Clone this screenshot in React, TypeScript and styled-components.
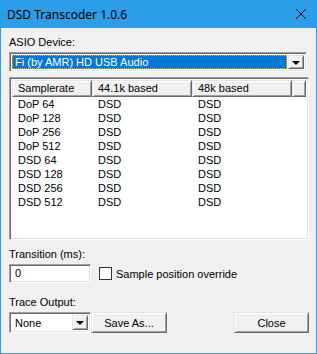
import React from 'react';
import styled, { createGlobalStyle } from 'styled-components';

const rates = ['DoP 64', 'DoP 128', 'DoP 256', 'DoP 512', 'DSD 64', 'DSD 128', 'DSD 256', 'DSD 512'];

const App: React.FC = () => {
  return (
    <Window>
      <GlobalStyle />
      <TitleBar>
        <Title>DSD Transcoder 1.0.6</Title>
        <CloseGlyph width="12" height="12" viewBox="0 0 12 12">
          <path d="M1 1 L11 11 M11 1 L1 11" stroke="#000" strokeWidth="1" fill="none" />
        </CloseGlyph>
      </TitleBar>

      <Body>
        <Label>ASIO Device:</Label>
        <Combo>
          <ComboValue $selected>Fi (by AMR) HD USB Audio</ComboValue>
          <DropButton>
            <Arrow />
          </DropButton>
        </Combo>

        <ListBox>
          <HeaderRow>
            <HeaderCell $w={80}>Samplerate</HeaderCell>
            <HeaderCell $w={100}>44.1k based</HeaderCell>
            <HeaderCell $w={100}>48k based</HeaderCell>
            <HeaderCell $w={15} />
          </HeaderRow>
          {rates.map((r) => (
            <Row key={r}>
              <Cell $w={80}>{r}</Cell>
              <Cell $w={100}>DSD</Cell>
              <Cell $w={100}>DSD</Cell>
            </Row>
          ))}
        </ListBox>

        <Label $top={8}>Transition (ms):</Label>
        <InputRow>
          <TextField>0</TextField>
          <CheckBox />
          <CheckLabel>Sample position override</CheckLabel>
        </InputRow>

        <Label $top={13}>Trace Output:</Label>
        <BottomRow>
          <SmallCombo>
            <ComboValue>None</ComboValue>
            <DropButton>
              <Arrow />
            </DropButton>
          </SmallCombo>
          <Button $w={76}>Save As...</Button>
          <Spacer />
          <Button $w={75}>Close</Button>
        </BottomRow>
      </Body>
    </Window>
  );
};

const GlobalStyle = createGlobalStyle`
  body {
    margin: 0;
    background: #fff;
  }
`;

const Window = styled.div`
  width: 317px;
  height: 354px;
  box-sizing: border-box;
  border: 1px solid #2b9de9;
  border-top: none;
  background: #f0f0f0;
  font-family: "Liberation Sans", Arial, sans-serif;
  font-size: 11px;
  color: #000;
  display: flex;
  flex-direction: column;
`;

const TitleBar = styled.div`
  height: 28px;
  margin: 0 -1px;
  background: #2b9de9;
  display: flex;
  align-items: center;
  justify-content: space-between;
  padding: 0 10px 0 7px;
  flex-shrink: 0;
`;

const Title = styled.div`
  font-family: "Noto Sans", "Open Sans", sans-serif;
  font-size: 12px;
  color: #000;
`;

const CloseGlyph = styled.svg`
  display: block;
`;

const Body = styled.div`
  padding: 8px 7px 0 8px;
  display: flex;
  flex-direction: column;
`;

const Label = styled.div<{ $top?: number }>`
  height: 13px;
  line-height: 13px;
  margin-top: ${(p) => p.$top ?? 0}px;
  margin-bottom: 3px;
`;

const sunken = `
  box-sizing: border-box;
  border: 1px solid;
  border-color: #a0a0a0 #fff #fff #a0a0a0;
  box-shadow: inset 1px 1px #696969, inset -1px -1px #e3e3e3;
`;

const raised = `
  box-sizing: border-box;
  border: 1px solid;
  border-color: #e3e3e3 #696969 #696969 #e3e3e3;
  box-shadow: inset 1px 1px #fff, inset -1px -1px #a0a0a0;
  background: #f0f0f0;
`;

const Combo = styled.div`
  ${sunken}
  width: 298px;
  height: 20px;
  background: #fff;
  display: flex;
  align-items: stretch;
  padding: 2px;
`;

const SmallCombo = styled(Combo)`
  width: 82px;
  height: 21px;
`;

const ComboValue = styled.div<{ $selected?: boolean }>`
  flex: 1;
  min-width: 0;
  display: flex;
  align-items: center;
  padding-left: 3px;
  margin-right: 1px;
  white-space: nowrap;
  overflow: hidden;
  background: ${(p) => (p.$selected ? '#0078d7' : 'transparent')};
  color: ${(p) => (p.$selected ? '#fff' : '#000')};
  outline: ${(p) => (p.$selected ? '1px dotted #ffb000' : 'none')};
  outline-offset: -1px;
`;

const DropButton = styled.div`
  ${raised}
  width: 16px;
  display: flex;
  align-items: center;
  justify-content: center;
`;

const Arrow = styled.div`
  width: 0;
  height: 0;
  border-left: 4px solid transparent;
  border-right: 4px solid transparent;
  border-top: 4px solid #000;
  margin-top: 1px;
`;

const ListBox = styled.div`
  ${sunken}
  margin-top: 5px;
  width: 300px;
  height: 163px;
  background: #fff;
  padding: 2px;
`;

const HeaderRow = styled.div`
  display: flex;
  height: 17px;
`;

const HeaderCell = styled.div<{ $w: number }>`
  ${raised}
  width: ${(p) => p.$w}px;
  flex-shrink: 0;
  padding-left: 5px;
  line-height: 15px;
  white-space: nowrap;
  overflow: hidden;
  &:last-child {
    flex: 1;
  }
`;

const Row = styled.div`
  display: flex;
  height: 14px;
  line-height: 14px;
`;

const Cell = styled.div<{ $w: number }>`
  width: ${(p) => p.$w}px;
  padding-left: 6px;
  box-sizing: border-box;
  flex-shrink: 0;
`;

const InputRow = styled.div`
  display: flex;
  align-items: center;
`;

const TextField = styled.div`
  ${sunken}
  width: 82px;
  height: 19px;
  background: #fff;
  padding-left: 5px;
  line-height: 17px;
`;

const CheckBox = styled.div`
  width: 13px;
  height: 13px;
  box-sizing: border-box;
  border: 1px solid #333;
  background: #fff;
  margin-left: 8px;
`;

const CheckLabel = styled.div`
  margin-left: 4px;
`;

const BottomRow = styled.div`
  display: flex;
  align-items: center;
`;

const Button = styled.div<{ $w: number }>`
  ${raised}
  width: ${(p) => p.$w}px;
  height: 21px;
  display: flex;
  align-items: center;
  justify-content: center;
`;

const Spacer = styled.div`
  flex: 1;
`;

export default App;
